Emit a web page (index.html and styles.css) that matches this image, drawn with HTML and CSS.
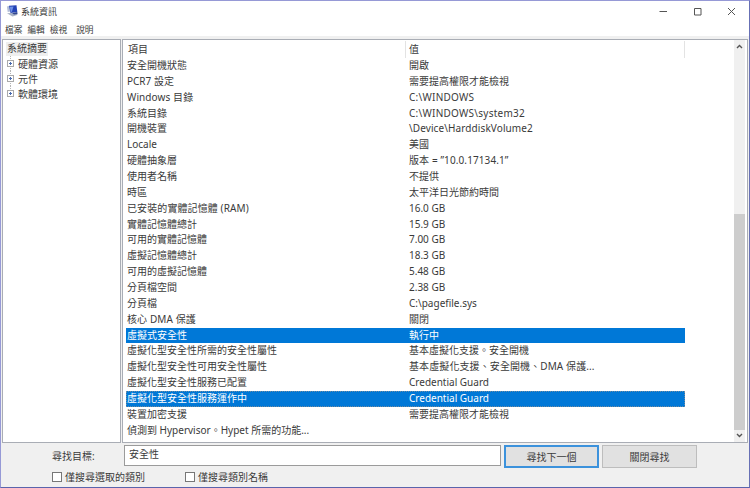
FILE: index.html
```html
<!DOCTYPE html>
<html lang="zh-Hant">
<head>
  <meta charset="UTF-8">
  <title>系統資訊</title>
  <link rel="stylesheet" href="styles.css">
</head>
<body>

  <div class="window">
    <div class="titlebar">
      <svg class="app-icon" width="12" height="12" viewBox="0 0 11 12">
        <path d="M0.4 1.4 L3 0.8 L4 6.5 L1.2 7 Z" fill="#b4bfd9"/>
        <path d="M2.5 0.8 L10 0.2 L10.8 7 L4 8 Z" fill="#2443b5"/>
        <path d="M3.2 1.7 L7 1.4 L5.4 6.8 L4.3 7 Z" fill="#6f91e6"/>
        <path d="M0.5 8.2 L4 8 L10.8 8.6 L10.8 10 L6 11.6 Z" fill="#a7b1c6"/>
        <path d="M5.5 8 L10.8 7 L11 9 L7.5 9.6 Z" fill="#30468f"/>
      </svg>
      <span class="title">系統資訊</span>
      <div class="controls">
        <svg width="9" height="9" viewBox="0 0 9 9"><path d="M0.5 4.5 H8"/></svg>
        <svg width="9" height="9" viewBox="0 0 9 9"><path d="M1.5 1.5 H8 V8 H1.5 Z"/></svg>
        <svg width="9" height="9" viewBox="0 0 9 9"><path d="M1 1 L8 8 M8 1 L1 8"/></svg>
      </div>
    </div>

    <div class="menubar">
      <span>檔案</span>
      <span>編輯</span>
      <span>檢視</span>
      <span class="help">說明</span>
    </div>

    <div class="panes">
      <ul class="tree">
        <li class="root"><span>系統摘要</span></li>
        <li class="node"><i class="plus"></i>硬體資源</li>
        <li class="node"><i class="plus"></i>元件</li>
        <li class="node"><i class="plus"></i>軟體環境</li>
      </ul>

      <div class="details">
        <div class="list">
          <div class="row head"><span>項目</span><span>值</span></div>
          <div class="row"><span>安全開機狀態</span><span>開啟</span></div>
          <div class="row"><span>PCR7 設定</span><span>需要提高權限才能檢視</span></div>
          <div class="row"><span class="wide">Windows 目錄</span><span class="path">C:\WINDOWS</span></div>
          <div class="row"><span>系統目錄</span><span class="path">C:\WINDOWS\system32</span></div>
          <div class="row"><span>開機裝置</span><span class="wide">\Device\HarddiskVolume2</span></div>
          <div class="row"><span>Locale</span><span>美國</span></div>
          <div class="row"><span>硬體抽象層</span><span class="wide">版本 = ”10.0.17134.1”</span></div>
          <div class="row"><span>使用者名稱</span><span>不提供</span></div>
          <div class="row"><span>時區</span><span>太平洋日光節約時間</span></div>
          <div class="row"><span class="wide">已安裝的實體記憶體 (RAM)</span><span>16.0 GB</span></div>
          <div class="row"><span>實體記憶體總計</span><span>15.9 GB</span></div>
          <div class="row"><span>可用的實體記憶體</span><span>7.00 GB</span></div>
          <div class="row"><span>虛擬記憶體總計</span><span>18.3 GB</span></div>
          <div class="row"><span>可用的虛擬記憶體</span><span>5.48 GB</span></div>
          <div class="row"><span>分頁檔空間</span><span>2.38 GB</span></div>
          <div class="row"><span>分頁檔</span><span>C:\pagefile.sys</span></div>
          <div class="row"><span class="wide">核心 DMA 保護</span><span>關閉</span></div>
          <div class="row selected"><span>虛擬式安全性</span><span>執行中</span></div>
          <div class="row"><span>虛擬化型安全性所需的安全性屬性</span><span>基本虛擬化支援。安全開機</span></div>
          <div class="row"><span>虛擬化型安全性可用安全性屬性</span><span class="wide">基本虛擬化支援、安全開機、DMA 保護...</span></div>
          <div class="row"><span>虛擬化型安全性服務已配置</span><span>Credential Guard</span></div>
          <div class="row selected focused"><span>虛擬化型安全性服務運作中</span><span>Credential Guard</span></div>
          <div class="row"><span>裝置加密支援</span><span>需要提高權限才能檢視</span></div>
          <div class="row"><span>偵測到 Hypervisor。Hypet 所需的功能...</span><span></span></div>
        </div>
        <div class="scrollbar">
          <svg class="arrow" width="11" height="12" viewBox="0 0 11 12"><path d="M3 8 L5.5 5.5 L8 8"/></svg>
          <div class="thumb"></div>
          <svg class="arrow" width="11" height="12" viewBox="0 0 11 12"><path d="M3 4 L5.5 6.5 L8 4"/></svg>
        </div>
      </div>
    </div>

    <div class="find">
      <div class="find-row">
        <label class="find-label">尋找目標:</label>
        <div class="find-input">安全性</div>
        <button class="btn default">尋找下一個</button>
        <button class="btn">關閉尋找</button>
      </div>
      <div class="checks">
        <label><i class="box"></i>僅搜尋選取的類別</label>
        <label><i class="box"></i>僅搜尋類別名稱</label>
      </div>
    </div>
  </div>

</body>
</html>
```

FILE: styles.css
```css
* {
  box-sizing: border-box;
}

body {
  margin: 0;
  font-family: "Noto Sans", "Noto Sans CJK TC", sans-serif;
  font-size: 10px;
  color: #3a3a3a;
  overflow: hidden;
}

.window {
  width: 750px;
  height: 488px;
  display: flex;
  flex-direction: column;
  background: #f0f0f0;
  border: 1px solid #9699d6;
  border-right-color: #6770b5;
  border-bottom-color: #5a64ac;
}

.titlebar {
  height: 20px;
  display: flex;
  align-items: center;
  padding-left: 5px;
  background: #fff;
}

.title {
  margin-left: 3px;
  font-size: 9px;
}

.controls {
  display: flex;
  gap: 25px;
  margin-left: auto;
  padding-right: 13px;
}

.controls svg {
  fill: none;
  stroke: #555;
  stroke-width: 1;
}

/* menu */
.menubar {
  height: 15px;
  display: flex;
  align-items: center;
  gap: 5px;
  padding: 1px 0 0 4px;
  background: #fff;
  font-size: 8.7px;
}

.menubar .help {
  margin-left: 4px;
}

/* panes */
.panes {
  display: flex;
  gap: 1px;
  height: 404px;
  margin: 3px 1px 0;
}

.tree {
  width: 119px;
  margin: 0;
  padding: 1px 0 0 4px;
  list-style: none;
  background: #fff;
  border: 1px solid #a9adb5;
}

.tree li {
  display: flex;
  align-items: center;
  height: 15px;
}

.tree .root {
  margin-left: -1px;
}

.tree .root span {
  height: 14px;
  line-height: 13px;
  padding: 0 1px;
  background: #efefef;
}

/* dotted connector runs behind the expanders */
.node {
  background: repeating-linear-gradient(#b5b5b5 0 1px, #fff 1px 2px) 3px 0 / 1px 100% no-repeat;
}

.node:last-child {
  background-size: 1px 50%;
}

.plus {
  width: 7px;
  height: 7px;
  margin-right: 4px;
  border: 1px solid #aaa;
  background:
    linear-gradient(#4a6cb0, #4a6cb0) center / 3px 1px no-repeat,
    linear-gradient(#4a6cb0, #4a6cb0) center / 1px 3px no-repeat,
    #fff;
}

.details {
  flex: 1;
  display: flex;
  justify-content: space-between;
  padding-left: 2px;
  background: #fff;
  border: 1px solid #a9adb5;
}

.list {
  width: 560px;
  padding-top: 1px;
}

.row {
  display: grid;
  grid-template-columns: 280px 1fr;
  height: 15.87px;
  line-height: 15.87px;
  margin-left: 1px;
  padding-left: 1px;
  white-space: nowrap;
}

.row span {
  min-width: 0;
}

.row span + span {
  padding-left: 2px;
}

.row .wide {
  letter-spacing: 0.1px;
}

.row .path {
  letter-spacing: 0.25px;
}

.head {
  height: 17px;
  line-height: 17px;
  padding-left: 2px;
  border-right: 1px solid #e3e3e3;
  grid-template-columns: 277px 1fr;
}

.head span + span {
  padding-left: 3px;
  border-left: 1px solid #e3e3e3;
}

.selected {
  background: #0078d7;
  color: #fff;
}

.focused {
  outline: 1px dotted #6f8ba0;
  outline-offset: -1px;
}

.scrollbar {
  width: 13px;
  display: flex;
  flex-direction: column;
  padding-right: 2px;
  background: linear-gradient(#f0f0f0, #f0f0f0) left / 11px 100% no-repeat;
}

.arrow {
  flex: none;
  fill: none;
  stroke: #555;
  stroke-width: 1.4;
}

.thumb {
  height: 216px;
  margin-top: auto;
  background: #cdcdcd;
}

/* find bar */
.find-row {
  display: flex;
  align-items: flex-start;
  padding-top: 2px;
}

.find-label {
  width: 123px;
  padding-left: 51px;
  line-height: 22px;
}

.find-input {
  width: 377px;
  height: 21px;
  padding-left: 4px;
  line-height: 17px;
  background: #fff;
  border: 1px solid #9b9b9b;
}

.btn {
  width: 95px;
  height: 23px;
  margin-left: 3px;
  padding: 0;
  font: inherit;
  color: #3a3a3a;
  background: #e1e1e1;
  border: 1px solid #bdbdbd;
}

.btn.default {
  border: 2px solid #3c92dc;
}

.checks {
  display: flex;
  gap: 40px;
  padding-left: 51px;
}

.checks label {
  display: flex;
  align-items: center;
  height: 16px;
}

.box {
  width: 10px;
  height: 10px;
  margin: 1px 3px 0 0;
  background: #fff;
  border: 1px solid #777;
}
```
